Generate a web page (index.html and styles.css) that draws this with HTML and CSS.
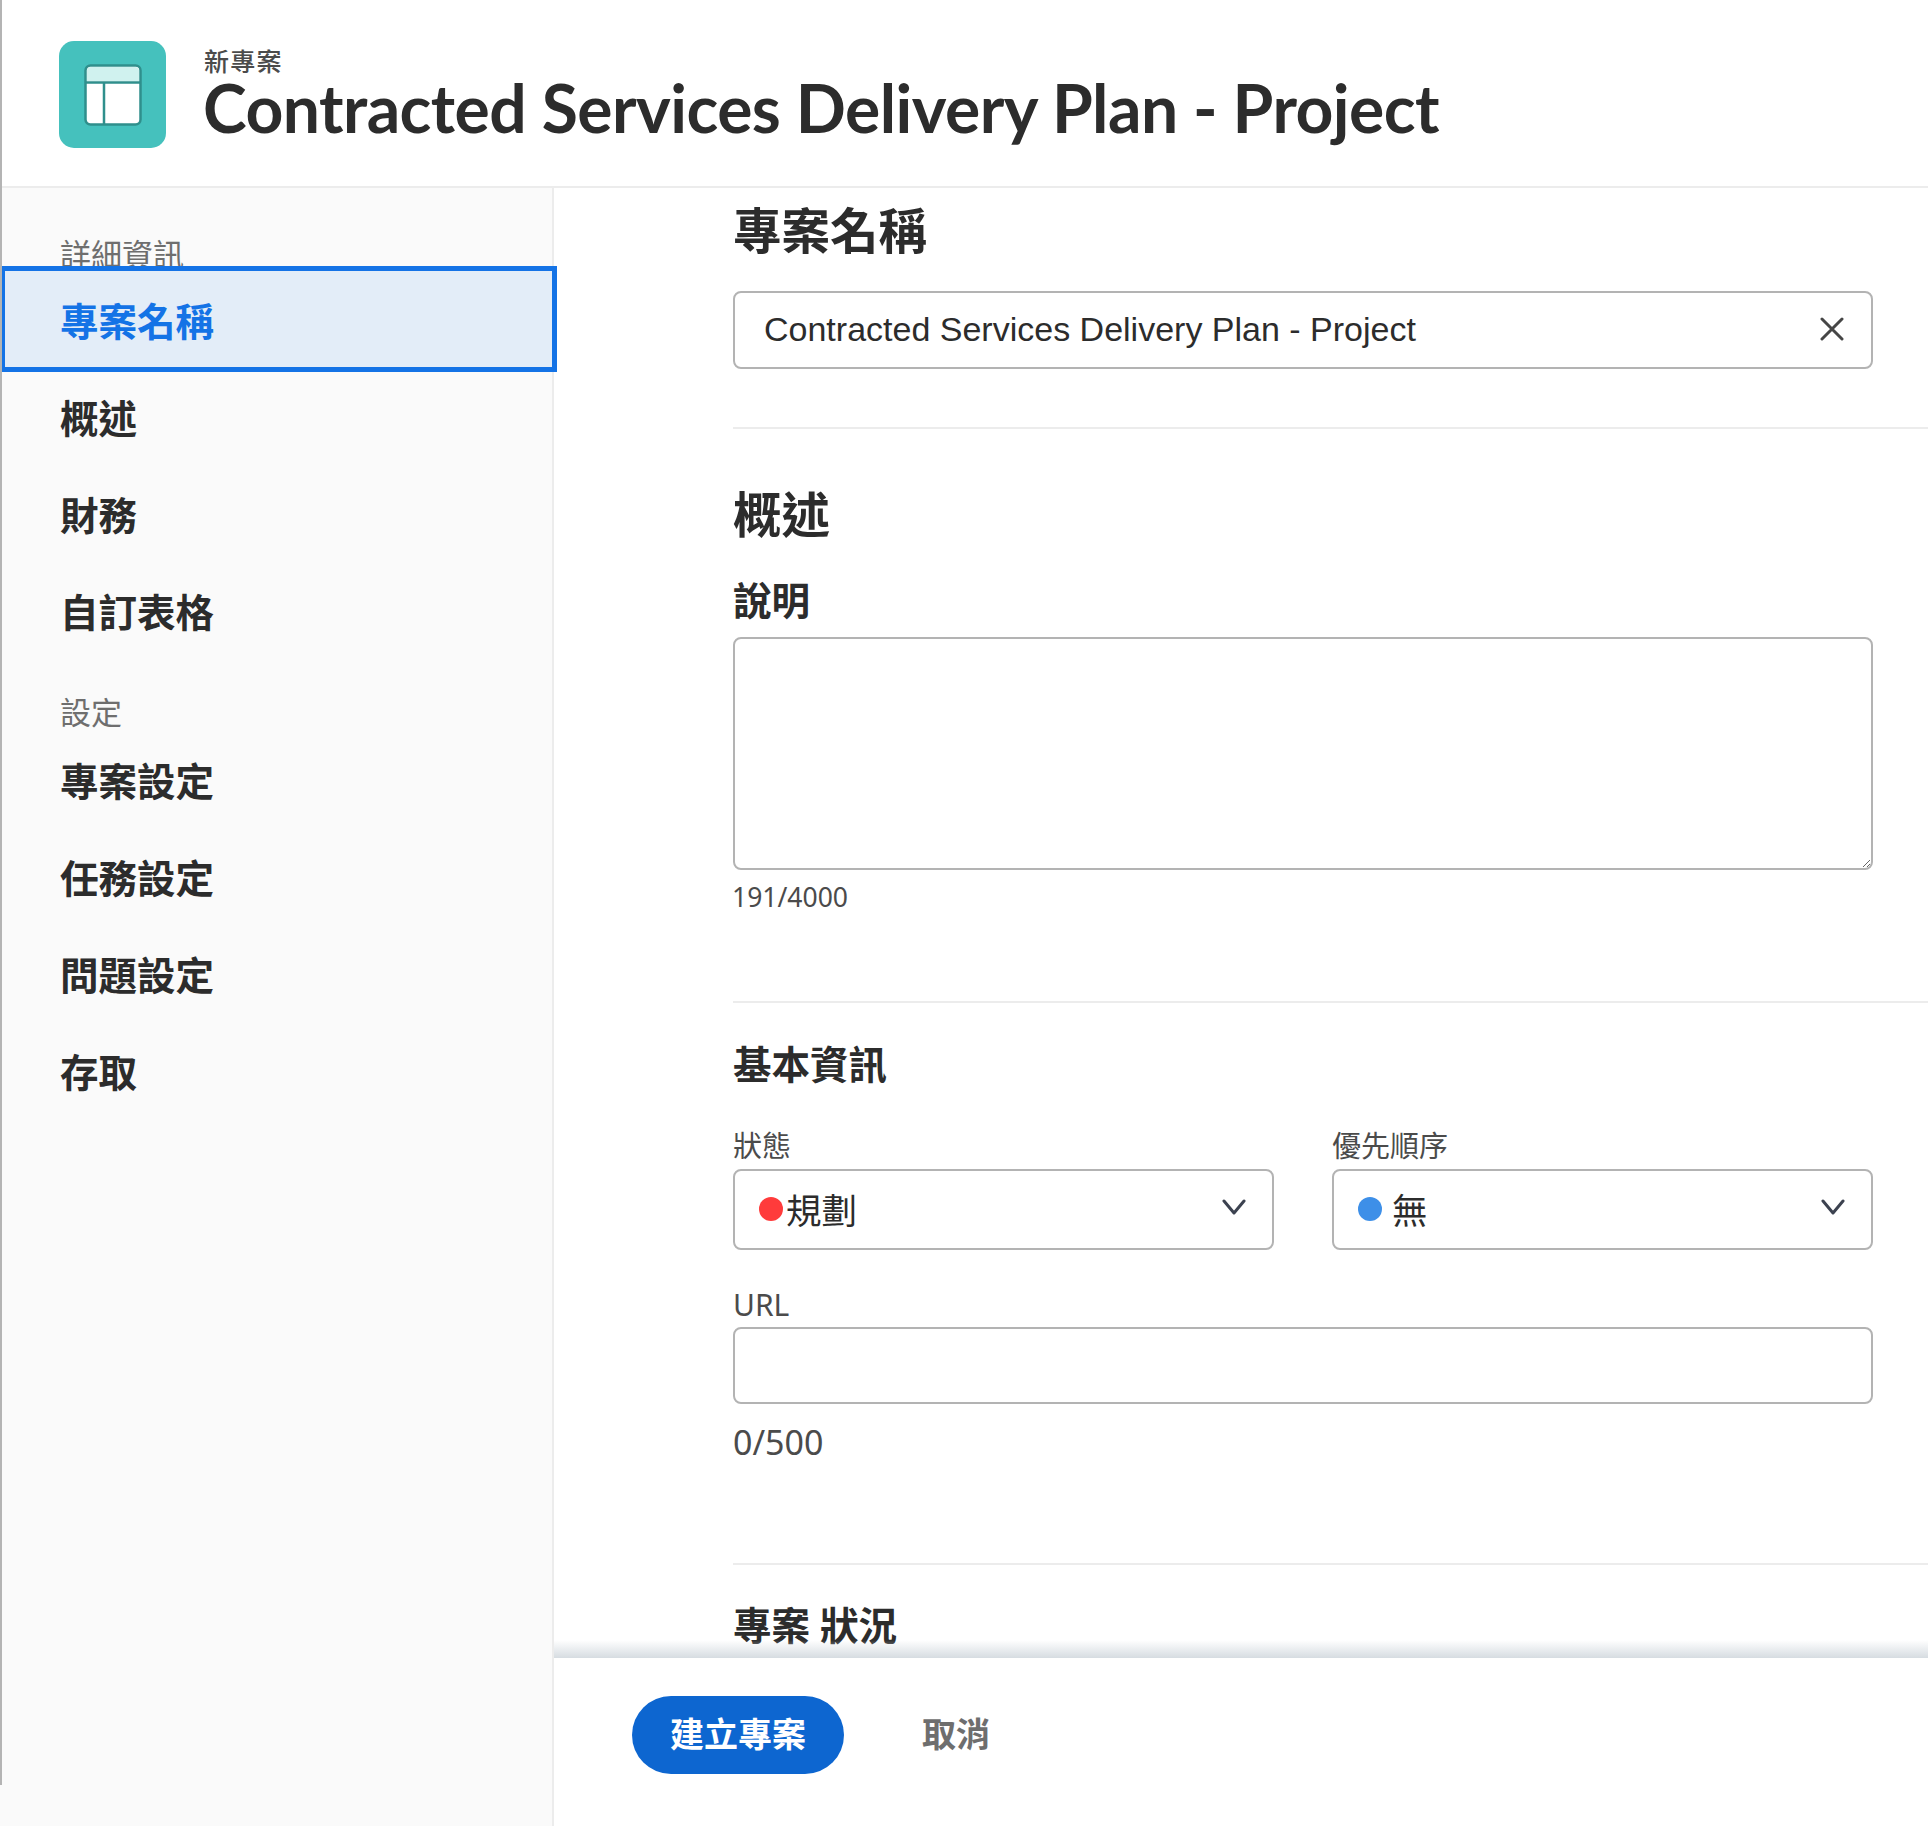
FILE: index.html
```html
<!DOCTYPE html>
<html lang="zh-Hant">
<head>
    <meta charset="UTF-8">
    <title>新專案</title>
    <link rel="stylesheet" href="styles.css">
</head>
<body>
    <div class="app">
        <header class="top">
            <div class="logo">
                <svg width="58" height="62" viewBox="0 0 58 62">
                    <rect x="1.5" y="1.5" width="55" height="59" rx="5" fill="#fff" stroke="#2f8f8c" stroke-width="2.5"/>
                    <path d="M3 17V6.5A4 4 0 0 1 7 3H51A4 4 0 0 1 55 6.5V17Z" fill="#d0f2ef"/>
                    <path d="M2 18.5H56M20 18.5V60" stroke="#2f8f8c" stroke-width="2.5" fill="none"/>
                </svg>
            </div>
            <div class="top-text">
                <div class="top-sub">新專案</div>
                <h1>Contracted Services Delivery Plan - Project</h1>
            </div>
        </header>
        <div class="body">
            <nav class="side">
                <div class="side-label first">詳細資訊</div>
                <a class="side-item active">專案名稱</a>
                <a class="side-item">概述</a>
                <a class="side-item">財務</a>
                <a class="side-item">自訂表格</a>
                <div class="side-label">設定</div>
                <a class="side-item">專案設定</a>
                <a class="side-item">任務設定</a>
                <a class="side-item">問題設定</a>
                <a class="side-item">存取</a>
            </nav>
            <main class="main">
                <div class="form">
                    <section class="sec sec-name">
                        <h2>專案名稱</h2>
                        <div class="field name-field">
                            <span>Contracted Services Delivery Plan - Project</span>
                            <svg width="24" height="24" viewBox="0 0 24 24"><path d="M2 2L22 22M22 2L2 22" stroke="#464646" stroke-width="3" stroke-linecap="round"/></svg>
                        </div>
                    </section>
                    <section class="sec sec-over">
                        <h2>概述</h2>
                        <h3>說明</h3>
                        <textarea class="desc"></textarea>
                        <div class="count">191/4000</div>
                    </section>
                    <section class="sec sec-basic">
                        <h3>基本資訊</h3>
                        <div class="row">
                            <div class="col">
                                <label>狀態</label>
                                <div class="field select">
                                    <span class="dot red"></span><span class="val">規劃</span>
                                    <svg class="chev" width="24" height="16" viewBox="0 0 24 16"><path d="M2 2L12 14L22 2" stroke="#3c4250" stroke-width="3" fill="none" stroke-linecap="round" stroke-linejoin="round"/></svg>
                                </div>
                            </div>
                            <div class="col">
                                <label>優先順序</label>
                                <div class="field select">
                                    <span class="dot blue"></span><span class="val none">無</span>
                                    <svg class="chev" width="24" height="16" viewBox="0 0 24 16"><path d="M2 2L12 14L22 2" stroke="#3c4250" stroke-width="3" fill="none" stroke-linecap="round" stroke-linejoin="round"/></svg>
                                </div>
                            </div>
                        </div>
                        <label class="url-label">URL</label>
                        <div class="field url"></div>
                        <div class="count url-count">0/500</div>
                    </section>
                    <section class="sec sec-status">
                        <h3>專案 狀況</h3>
                    </section>
                </div>
                <footer class="foot">
                    <button class="btn-create">建立專案</button>
                    <button class="btn-cancel">取消</button>
                </footer>
            </main>
        </div>
    </div>
</body>
</html>
```
FILE: styles.css
```css
* { box-sizing: border-box; }
html, body { margin: 0; padding: 0; background: #fff; }
body { font-family: "Noto Sans", "Noto Sans CJK TC", sans-serif; color: #2c2c2c; }

.app { position: relative; height: 1826px; overflow: hidden; }
.app::before { content: ""; position: absolute; left: 0; top: 0; width: 2px; height: 1785px; background: #b4b4b4; z-index: 3; }

.top { height: 188px; display: flex; align-items: flex-start; padding: 41px 0 0 59px; border-bottom: 2px solid #ececec; }
.logo { width: 107px; height: 107px; border-radius: 15px; background: #45c1bd; display: flex; align-items: center; justify-content: center; flex: none; }
.top-text { margin-left: 38px; }
.top-sub { font-size: 25px; line-height: 24px; margin-top: 8px; font-weight: 500; color: #4b4b4b; letter-spacing: 1.3px; }
h1 { margin: 0 0 0 -1px; font-family: "Lato", "Noto Sans CJK TC", sans-serif; font-size: 66px; line-height: 70px; font-weight: 700; color: #2c2c2c; white-space: nowrap; letter-spacing: -0.55px; }

.body { display: flex; height: 1638px; }

.side { width: 554px; flex: none; background: #fafafa; border-right: 2px solid #ececec; position: relative; }
.side-label { padding-left: 60px; font-size: 31px; line-height: 36px; color: #6e6e6e; margin-top: 32px; height: 40px; padding-top: 4px; }
.side-label.first { margin-top: 44px; height: 34px; }
.side-item { display: flex; align-items: center; height: 97px; padding-left: 60px; font-size: 38.5px; font-weight: 700; color: #2c2c2c; }
.side-item.active { width: 557px; height: 106px; margin-bottom: -5px; background: #e3edf8; border: 5px solid #1473e6; color: #1473e6; padding-left: 55px; position: relative; }

.main { flex: 1; min-width: 0; display: flex; flex-direction: column; position: relative; }
.form { flex: 1; overflow: hidden; padding-left: 179px; }

h2 { margin: 0; font-size: 48.5px; line-height: 60px; font-weight: 700; }
h3 { margin: 0; font-size: 38.5px; line-height: 48px; font-weight: 700; }
label { display: block; font-size: 29px; line-height: 36px; color: #4b4b4b; }

.sec { border-bottom: 2px solid #ececec; }
.sec-name { padding-top: 12px; height: 241px; }
.sec-over { padding-top: 55px; height: 574px; }
.sec-over h3 { margin-top: 32px; }
.sec-basic { padding-top: 37px; height: 562px; }
.sec-status { padding-top: 36px; border-bottom: 0; }

.field { width: 1140px; border: 2px solid #b3b3b3; border-radius: 8px; background: #fff; display: flex; align-items: center; }
.name-field { height: 78px; margin-top: 31px; padding: 0 27px 2px 29px; justify-content: space-between; font-family: "Liberation Sans", sans-serif; font-size: 34px; color: #2c2c2c; }

.desc { display: block; width: 1140px; height: 233px; margin-top: 13px; border: 2px solid #b3b3b3; border-radius: 8px; background: #fff; }
.count { font-size: 26.5px; line-height: 36px; margin: 9px 0 0 -1px; color: #4b4b4b; }

.row { display: flex; gap: 58px; width: 1140px; margin-top: 40px; }
.col { flex: 1; }
.col label { margin-bottom: 5px; }
.select { width: 100%; height: 81px; padding: 0 0 2px 24px; position: relative; }
.dot { width: 24px; height: 24px; border-radius: 50%; flex: none; }
.dot.red { background: #ff3b3b; }
.dot.blue { background: #3d8fe8; }
.val { font-size: 35.5px; color: #2c2c2c; margin-left: 3px; }
.val.none { margin-left: 10px; }
.chev { position: absolute; right: 26px; top: 28px; }

.url-label { margin-top: 37px; font-size: 30px; }
.url { height: 77px; margin-top: 4px; }
.url-count { margin: 20px 0 0; font-size: 34px; }

.foot { height: 168px; flex: none; background: #fff; display: flex; align-items: flex-start; padding: 38px 0 0 78px; gap: 78px; position: relative; }
.foot::before { content: ""; position: absolute; left: 0; right: 0; top: -18px; height: 18px; background: linear-gradient(to bottom, rgba(214,220,225,0), #d6dce1); }
.btn-create { width: 212px; height: 78px; border: 0; border-radius: 39px; background: #0d66d0; color: #fff; font-family: inherit; font-size: 34px; font-weight: 700; padding: 0 0 6px; }
.btn-cancel { height: 78px; border: 0; background: none; color: #6e6e6e; font-family: inherit; font-size: 34px; font-weight: 700; padding: 0 0 6px; }
```
